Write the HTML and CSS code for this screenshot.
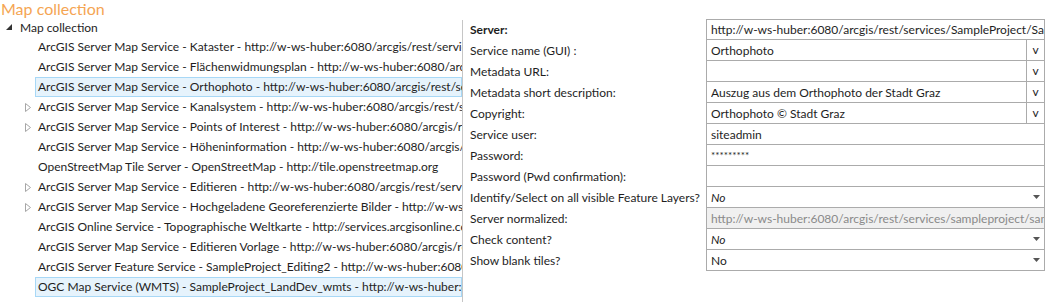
FILE: index.html
```html
<!DOCTYPE html>
<html lang="en">
<head>
  <meta charset="UTF-8">
  <title>Map collection</title>
  <link rel="stylesheet" href="styles.css">
</head>
<body>

<div class="page">
  <!-- Tree of map services -->
  <div class="tree-panel">
    <h1 class="title">Map collection</h1>
    <div class="tree-row root">
      <svg class="expander" width="8" height="8" viewBox="0 0 8 8"><polygon points="7,1 7,7 1,7" fill="#333"/></svg>
      <span>Map collection</span>
    </div>
    <ul class="tree">
      <li class="item">ArcGIS Server Map Service - Kataster - http://w-ws-huber:6080/arcgis/rest/services/</li>
      <li class="item">ArcGIS Server Map Service - Fl&auml;chenwidmungsplan - http://w-ws-huber:6080/arcgis</li>
      <li class="item selected">ArcGIS Server Map Service - Orthophoto - http://w-ws-huber:6080/arcgis/rest/servi</li>
      <li class="item has-children"><svg class="expander" width="8" height="9" viewBox="0 0 8 9"><polygon points="1.5,0.5 6.5,4.5 1.5,8.5" fill="none" stroke="#a6a6a6"/></svg>ArcGIS Server Map Service - Kanalsystem - http://w-ws-huber:6080/arcgis/rest/servi</li>
      <li class="item has-children"><svg class="expander" width="8" height="9" viewBox="0 0 8 9"><polygon points="1.5,0.5 6.5,4.5 1.5,8.5" fill="none" stroke="#a6a6a6"/></svg>ArcGIS Server Map Service - Points of Interest - http://w-ws-huber:6080/arcgis/rest/</li>
      <li class="item">ArcGIS Server Map Service - H&ouml;heninformation - http://w-ws-huber:6080/arcgis/res</li>
      <li class="item">OpenStreetMap Tile Server - OpenStreetMap - http://tile.openstreetmap.org</li>
      <li class="item has-children"><svg class="expander" width="8" height="9" viewBox="0 0 8 9"><polygon points="1.5,0.5 6.5,4.5 1.5,8.5" fill="none" stroke="#a6a6a6"/></svg>ArcGIS Server Map Service - Editieren - http://w-ws-huber:6080/arcgis/rest/services</li>
      <li class="item has-children"><svg class="expander" width="8" height="9" viewBox="0 0 8 9"><polygon points="1.5,0.5 6.5,4.5 1.5,8.5" fill="none" stroke="#a6a6a6"/></svg>ArcGIS Server Map Service - Hochgeladene Georeferenzierte Bilder - http://w-ws-hu</li>
      <li class="item">ArcGIS Online Service - Topographische Weltkarte - http://services.arcgisonline.com</li>
      <li class="item">ArcGIS Server Map Service - Editieren Vorlage - http://w-ws-huber:6080/arcgis/rest/</li>
      <li class="item">ArcGIS Server Feature Service - SampleProject_Editing2 - http://w-ws-huber:6080/ar</li>
      <li class="item selected">OGC Map Service (WMTS) - SampleProject_LandDev_wmts - http://w-ws-huber:608</li>
    </ul>
  </div>

  <!-- Property grid -->
  <div class="props-panel">
    <div class="props">
      <div class="label bold">Server:</div>
      <div class="cell">http://w-ws-huber:6080/arcgis/rest/services/SampleProject/SampleProject_LandDev</div>

      <div class="label">Service name (GUI) :</div>
      <div class="cell with-btn"><span class="value">Orthophoto</span><span class="btn">v</span></div>

      <div class="label">Metadata URL:</div>
      <div class="cell with-btn"><span class="value"></span><span class="btn">v</span></div>

      <div class="label">Metadata short description:</div>
      <div class="cell with-btn"><span class="value">Auszug aus dem Orthophoto der Stadt Graz</span><span class="btn">v</span></div>

      <div class="label">Copyright:</div>
      <div class="cell with-btn"><span class="value">Orthophoto &copy; Stadt Graz</span><span class="btn">v</span></div>

      <div class="label">Service user:</div>
      <div class="cell">siteadmin</div>

      <div class="label">Password:</div>
      <div class="cell password">*********</div>

      <div class="label">Password (Pwd confirmation):</div>
      <div class="cell"></div>

      <div class="label">Identify/Select on all visible Feature Layers?</div>
      <div class="cell select"><span class="value italic">No</span><svg width="7" height="4" viewBox="0 0 7 4"><polygon points="0,0 7,0 3.5,4" fill="#555"/></svg></div>

      <div class="label">Server normalized:</div>
      <div class="cell disabled">http://w-ws-huber:6080/arcgis/rest/services/sampleproject/sampleproject_landdev</div>

      <div class="label">Check content?</div>
      <div class="cell select"><span class="value italic">No</span><svg width="7" height="4" viewBox="0 0 7 4"><polygon points="0,0 7,0 3.5,4" fill="#555"/></svg></div>

      <div class="label">Show blank tiles?</div>
      <div class="cell select"><span class="value">No</span><svg width="7" height="4" viewBox="0 0 7 4"><polygon points="0,0 7,0 3.5,4" fill="#555"/></svg></div>
    </div>
  </div>
</div>

</body>
</html>
```

FILE: styles.css
```css
body {
  font-family: Lato, "Noto Sans", Arial, sans-serif;
  font-size: 12px;
  color: #1e1e1e;
  background-color: white;
  margin: 0;
  padding: 0;
}

.page {
  display: flex;
  width: 1047px;
  height: 302px;
  overflow: hidden;
}

.tree-panel {
  width: 462px;
  flex-shrink: 0;
  overflow: hidden;
  white-space: nowrap;
}

.title {
  margin: 0;
  padding-left: 1px;
  height: 17px;
  line-height: 17px;
  font-size: 16px;
  font-weight: normal;
  color: #f5a553;
}

.tree-row {
  height: 20px;
  display: flex;
  align-items: center;
}

.root {
  padding-left: 5px;
}

.root .expander {
  margin-right: 7px;
}

.tree {
  list-style: none;
  margin: 0;
  padding: 0;
}

.item {
  position: relative;
  height: 20px;
  line-height: 20px;
  padding-left: 38px;
  box-sizing: border-box;
}

.item .expander {
  position: absolute;
  left: 24px;
  top: 6px;
}

.item.selected {
  margin-left: 35px;
  padding-left: 2px;
  line-height: 18px;
  background-color: #e6f3fc;
  border: 1px solid #a8d8f6;
}

.props-panel {
  flex: 1;
  margin-top: 20px;
  border-left: 1px solid #c6c6c6;
  padding-left: 7px;
}

.props {
  display: grid;
  grid-template-columns: 236px 339px;
  grid-auto-rows: 21px;
  margin-top: -1px;
}

.label {
  line-height: 21px;
  white-space: nowrap;
  overflow: hidden;
}

.bold {
  font-weight: bold;
}

.cell {
  display: flex;
  align-items: center;
  border: 1px solid #ababab;
  border-top: none;
  padding-left: 4px;
  white-space: nowrap;
  overflow: hidden;
  box-sizing: border-box;
}

.props .cell:nth-child(2) {
  border-top: 1px solid #ababab;
}

.value {
  flex: 1;
  overflow: hidden;
}

.with-btn {
  padding-right: 0;
}

.btn {
  width: 17px;
  height: 100%;
  border-left: 1px solid #ababab;
  text-align: center;
  line-height: 19px;
}

.select {
  padding-right: 4px;
}

.italic {
  font-style: italic;
}

.password {
  font-size: 10px;
}

.disabled {
  background-color: #f0f0f0;
  color: #8a8a8a;
}
```
